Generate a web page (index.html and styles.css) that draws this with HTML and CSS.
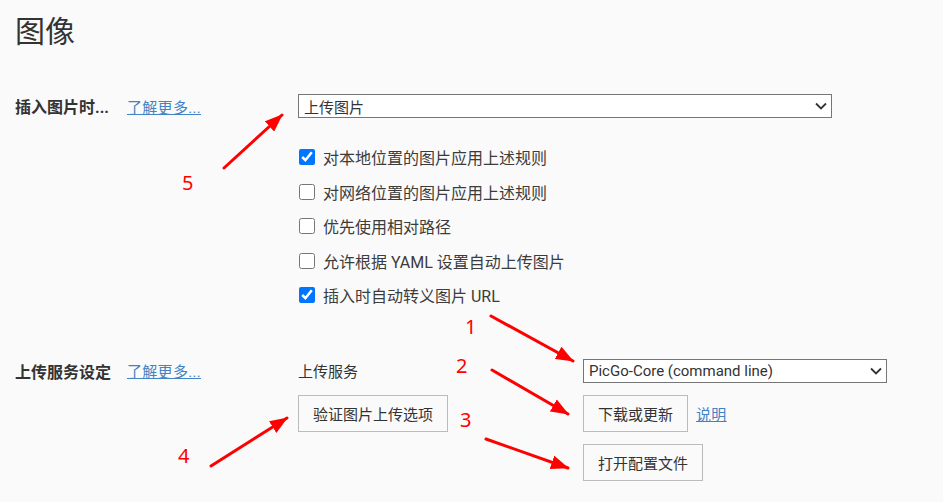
FILE: index.html
```html
<!DOCTYPE html>
<html>
  <head>
    <meta charset="utf-8">
    <title>图像</title>
    <link rel="stylesheet" href="styles.css">
  </head>
  <body>
    <div class="seite">
      <h1 class="titel">图像</h1>

      <div class="einstellung">
        <div class="kopf">
          <span class="kopf-text">插入图片时...</span>
          <a class="mehr" href="#">了解更多...</a>
        </div>
        <div class="inhalt">
          <div class="auswahl breit">
            <span>上传图片</span>
            <svg width="12" height="8" viewBox="0 0 12 8"><path d="M1 1.5 L6 6.5 L11 1.5" fill="none" stroke="#333" stroke-width="1.8"/></svg>
          </div>
          <div class="optionen">
            <label class="option"><input type="checkbox" checked> 对本地位置的图片应用上述规则</label>
            <label class="option"><input type="checkbox"> 对网络位置的图片应用上述规则</label>
            <label class="option"><input type="checkbox"> 优先使用相对路径</label>
            <label class="option"><input type="checkbox"> 允许根据 YAML 设置自动上传图片</label>
            <label class="option"><input type="checkbox" checked> 插入时自动转义图片 URL</label>
          </div>
        </div>
      </div>

      <div class="einstellung zweite">
        <div class="kopf">
          <span class="kopf-text">上传服务设定</span>
          <a class="mehr" href="#">了解更多...</a>
        </div>
        <div class="dienst">
          <div class="dienst-name">上传服务</div>
          <div class="auswahl schmal">
            <span>PicGo-Core (command line)</span>
            <svg width="12" height="8" viewBox="0 0 12 8"><path d="M1 1.5 L6 6.5 L11 1.5" fill="none" stroke="#333" stroke-width="1.8"/></svg>
          </div>
          <div><button class="knopf">验证图片上传选项</button></div>
          <div class="knopf-reihe">
            <button class="knopf">下载或更新</button>
            <a class="mehr" href="#">说明</a>
          </div>
          <div></div>
          <div><button class="knopf">打开配置文件</button></div>
        </div>
      </div>
    </div>

    <!-- Markierungen über dem Screenshot -->
    <svg class="pfeile" width="943" height="502" viewBox="0 0 943 502">
      <defs>
        <marker id="spitze" markerUnits="userSpaceOnUse" markerWidth="18" markerHeight="14" refX="17" refY="7" orient="auto">
          <path d="M0 0 L18 7 L0 14 Z" fill="#ff0000"/>
        </marker>
      </defs>
      <g stroke="#ff0000" stroke-width="3" stroke-linecap="round" marker-end="url(#spitze)">
        <line x1="224" y1="168" x2="282" y2="115"/>
        <line x1="491" y1="316" x2="573" y2="361"/>
        <line x1="492" y1="370" x2="568" y2="414"/>
        <line x1="486" y1="439" x2="568" y2="468"/>
        <line x1="211" y1="466" x2="287" y2="418"/>
      </g>
      <g class="zahl" fill="#ff0000">
        <text x="182" y="190">5</text>
        <text x="465" y="334">1</text>
        <text x="456" y="373">2</text>
        <text x="460" y="427">3</text>
        <text x="178" y="463">4</text>
      </g>
    </svg>
  </body>
</html>
```

FILE: styles.css
```css
body {
  margin: 0;
  background-color: #fafafa;
  color: #333;
  font-family: Roboto, "Noto Sans CJK SC", sans-serif;
  position: relative;
  width: 943px;
  height: 502px;
  overflow: hidden;
}

.seite {
  padding: 12px 15px;
}

.titel {
  margin: 0;
  font-size: 30px;
  font-weight: normal;
  line-height: 40px;
}

.einstellung {
  display: grid;
  grid-template-columns: 283px 1fr;
  margin-top: 42px;
}

.einstellung.zweite {
  margin-top: 46px;
}

.kopf {
  display: flex;
  align-items: center;
  height: 24px;
  gap: 15px;
}

.kopf-text {
  width: 97px;
  white-space: nowrap;
  font-size: 16px;
  font-weight: bold;
}

.mehr {
  color: #4183c4;
  font-size: 15px;
  letter-spacing: 0.3px;
  text-decoration: underline;
}

.auswahl {
  display: flex;
  align-items: center;
  justify-content: space-between;
  box-sizing: border-box;
  height: 24px;
  padding: 0 4px 0 5px;
  border: 1px solid #767676;
  background-color: white;
  font-size: 15px;
}

.auswahl.breit {
  width: 534px;
}

.auswahl.schmal {
  width: 304px;
}

.optionen {
  margin-top: 22px;
}

.option {
  display: flex;
  align-items: center;
  height: 34.5px;
  gap: 8px;
  font-size: 16px;
  color: #3c3c3c;
}

.option input {
  width: 16px;
  height: 16px;
  margin: 0 0 0 1px;
}

.dienst {
  display: grid;
  grid-template-columns: 285px 1fr;
  row-gap: 12px;
  align-items: center;
}

.dienst-name {
  font-size: 15px;
}

.knopf-reihe {
  display: flex;
  align-items: center;
  gap: 8px;
}

.knopf {
  height: 37px;
  padding: 0 14px;
  border: 1px solid #bbb;
  background-color: #fafafa;
  color: #333;
  font-family: inherit;
  font-size: 15px;
}

.pfeile {
  position: absolute;
  top: 0;
  left: 0;
  pointer-events: none;
}

.zahl {
  font-family: "Noto Sans", sans-serif;
  font-size: 20px;
}
```
